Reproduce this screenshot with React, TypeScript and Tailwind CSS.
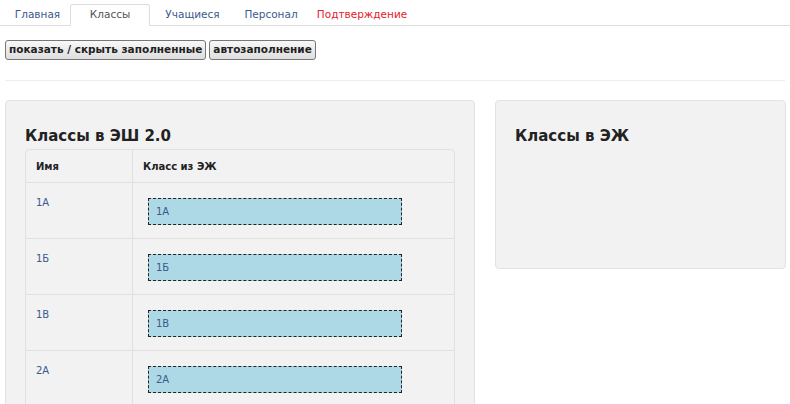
export default function App() {
  const rows = ["1А", "1Б", "1В", "2А"];
  const f = { fontFamily: '"DejaVu Sans", Verdana, sans-serif' };
  return (
    <div className="w-[790px] h-[404px] overflow-hidden bg-white text-[#333]" style={f}>
      <div className="flex pl-[5px] pt-[4px] border-b border-[#dddddd] h-[26px] text-[10.5px]">
        <div className="w-[65px] flex items-center justify-center text-[#3a5a8c]">Главная</div>
        <div className="w-[80px] flex items-center justify-center text-[#555] bg-white border border-[#dddddd] border-b-white rounded-t-[3px] -mb-px">Классы</div>
        <div className="w-[85px] flex items-center justify-center text-[#3a5a8c]">Учащиеся</div>
        <div className="w-[72px] flex items-center justify-center text-[#3a5a8c]">Персонал</div>
        <div className="w-[110px] flex items-center justify-center text-[#e8202a]">Подтверждение</div>
      </div>
      <div className="flex gap-[3px] pl-[5px] mt-[14px]">
        <button className="h-[20px] px-[3px] text-[10.5px] font-bold text-[#222] bg-gradient-to-b from-[#f8f8f8] to-[#dedede] border border-[#777] rounded-[3px]">показать / скрыть заполненные</button>
        <button className="h-[20px] px-[3px] text-[10.5px] font-bold text-[#222] bg-gradient-to-b from-[#f8f8f8] to-[#dedede] border border-[#777] rounded-[3px]">автозаполнение</button>
      </div>
      <div className="mt-[20px] border-t border-[#eeeeee] mx-[5px]" />
      <div className="flex items-start gap-[20px] pl-[5px] mt-[19px]">
        <div className="w-[470px] h-[320px] bg-[#f2f2f2] border border-[#e3e3e3] rounded-[4px] px-[19px] pt-[25px]">
          <div className="text-[15px] font-bold text-[#222] leading-[20px] mb-[3px]">Классы в ЭШ 2.0</div>
          <div className="border border-[#e0e0e0] rounded-[4px] text-[10px]">
            <div className="flex h-[33px] border-b border-[#e0e0e0] font-bold text-[#222]">
              <div className="w-[107px] border-r border-[#e0e0e0] pl-[10px] flex items-center">Имя</div>
              <div className="flex-1 pl-[10px] flex items-center">Класс из ЭЖ</div>
            </div>
            {rows.map((r) => (
              <div key={r} className="flex h-[56px] border-b border-[#e0e0e0]">
                <div className="w-[107px] border-r border-[#e0e0e0] pl-[10px] pt-[12px] text-[#3a5a8c]">{r}</div>
                <div className="flex-1 pl-[15px] pt-[15px]">
                  <div className="w-[254px] h-[27px] bg-[#add8e6] border border-dashed border-[#222] pl-[7px] flex items-center text-[#3a5a8c]">{r}</div>
                </div>
              </div>
            ))}
          </div>
        </div>
        <div className="w-[291px] h-[169px] bg-[#f2f2f2] border border-[#e3e3e3] rounded-[4px] px-[19px] pt-[25px]">
          <div className="text-[15px] font-bold text-[#222] leading-[20px]">Классы в ЭЖ</div>
        </div>
      </div>
    </div>
  );
}
